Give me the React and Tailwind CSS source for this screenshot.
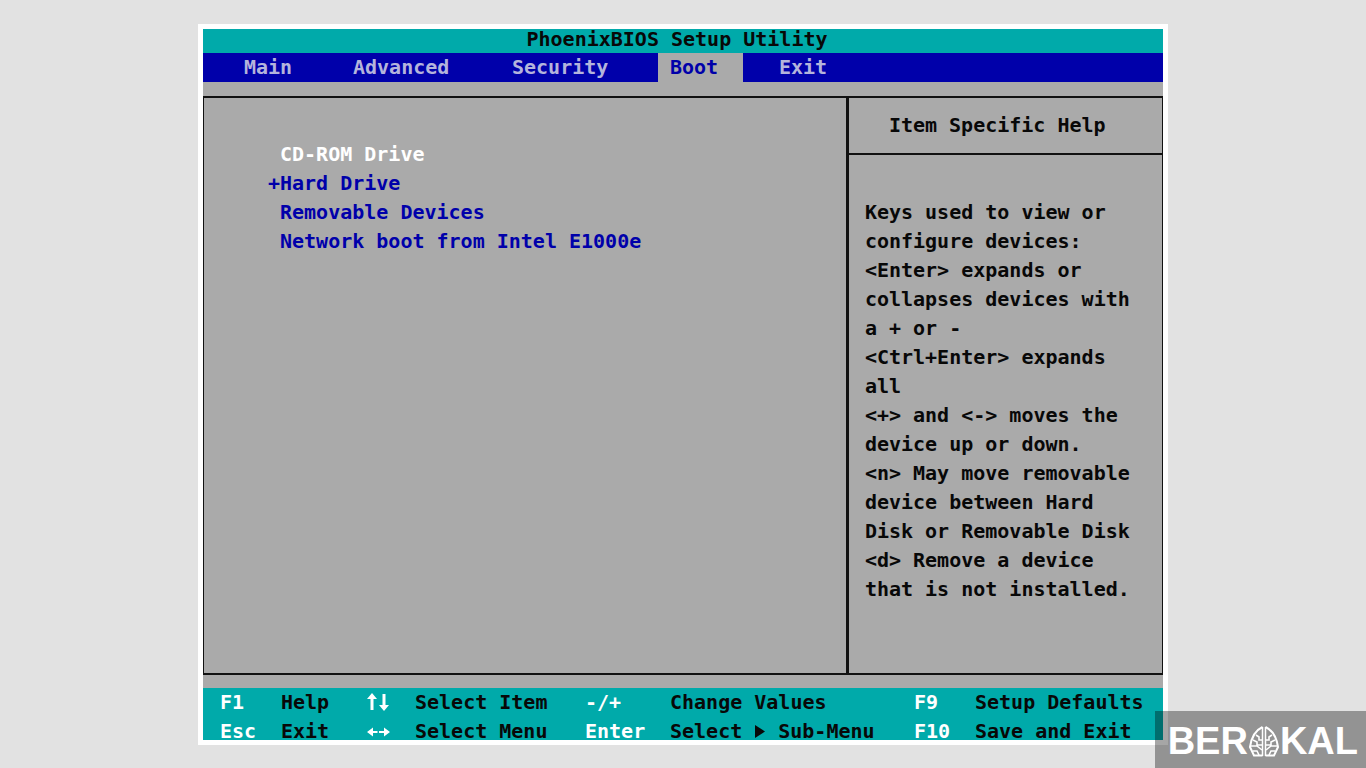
import React, { useState } from "react";

const menuItems = [
  { name: "Main", width: "w-[109px]" },
  { name: "Advanced", width: "w-[159px]" },
  { name: "Security", width: "w-[158px]" },
  { name: "Boot", width: "w-[85px]" },
  { name: "Exit", width: "w-[85px] ml-6" },
];

const bootDevices = [
  { name: "CD-ROM Drive" },
  { name: "Hard Drive", expandable: true },
  { name: "Removable Devices" },
  { name: "Network boot from Intel E1000e" },
];

const helpLines = [
  "Keys used to view or",
  "configure devices:",
  "<Enter> expands or",
  "collapses devices with",
  "a + or -",
  "<Ctrl+Enter> expands",
  "all",
  "<+> and <-> moves the",
  "device up or down.",
  "<n> May move removable",
  "device between Hard",
  "Disk or Removable Disk",
  "<d> Remove a device",
  "that is not installed.",
];

const UpDownIcon = () => (
  <svg width="24" height="29" viewBox="0 0 24 29" fill="currentColor" aria-label="Up and down">
    <path d="M6 5l5 6H7.500v11h-3V11H1zM18 23l-5-6h3.500V6h3v11H23z" />
  </svg>
);

const LeftRightIcon = () => (
  <svg width="24" height="29" viewBox="0 0 24 29" fill="currentColor" aria-label="Left and right">
    <path d="M1 15l6-4.500V14h4.500v2H7v3.500zM24 15l-6-4.500V14h-5v2h5v3.500z" />
  </svg>
);

const SubMenuIcon = () => (
  <svg width="12" height="29" viewBox="0 0 12 29" fill="currentColor" className="mx-3" aria-hidden="true">
    <path d="M1 8l10 6.500L1 21z" />
  </svg>
);

const LeafIcon = () => (
  <svg width="32" height="34" viewBox="0 0 32 34" fill="none" stroke="white" strokeWidth="2" aria-label="O">
    <path d="M14.500 2C8 5 3.500 12 2 22l4 8.500h8.500M17.500 2C24 5 28.500 12 30 22l-4 8.500h-8.500" />
    <path d="M14.500 2v29M17.500 2v29" strokeWidth="1.500" />
    <path d="M8 10l3 2v3h3M5 15l4 2v3h5M3 21h6l5 4M5 26h4l2 4M24 10l-3 2v3h-3M27 15l-4 2v3h-5M29 21h-6l-5 4M27 26h-4l-2 4" strokeWidth="1.600" />
  </svg>
);

const App = () => {
  const [activeMenu, setActiveMenu] = useState("Boot");
  const [selected, setSelected] = useState("CD-ROM Drive");

  return (
    <div className="relative min-h-screen bg-[#e2e2e2] pt-6 pb-5 font-['DejaVu_Sans_Mono',monospace] text-[20px] leading-[29px] font-bold text-[#080808]">
      <div className="mx-auto w-full max-w-[970px] border-5 border-white bg-[#aaaaaa]">
        <header>
          <div className="h-6 bg-[#00aaaa] pr-3 text-center">
            <h1 className="leading-5">PhoenixBIOS Setup Utility</h1>
          </div>
          <nav className="flex bg-[#0000aa] pl-[29px]">
            {menuItems.map((item) => (
              <button
                key={item.name}
                type="button"
                onClick={() => setActiveMenu(item.name)}
                className={`pl-3 text-left ${item.width} ${
                  activeMenu === item.name
                    ? "bg-[#aaaaaa] text-[#0000aa]"
                    : "text-[#b4b4dc]"
                }`}
              >
                {item.name}
              </button>
            ))}
          </nav>
        </header>

        <main className="mt-[14px] mb-[13px] flex min-h-[579px] border-x border-y-2 border-[#111111]">
          <section className="flex-1 pt-[42px] pl-16">
            <ul>
              {bootDevices.map((device) => (
                <li key={device.name}>
                  <button
                    type="button"
                    onClick={() => setSelected(device.name)}
                    className={`flex text-left ${
                      selected === device.name ? "text-white" : "text-[#0000aa]"
                    }`}
                  >
                    <span className="w-3">{device.expandable ? "+" : ""}</span>
                    {device.name}
                  </button>
                </li>
              ))}
            </ul>
          </section>

          <aside className="w-[33%] border-l-3 border-[#111111]">
            <h2 className="border-b-2 border-[#111111] py-[13px] pl-10">
              Item Specific Help
            </h2>
            <div className="pt-[43px] pl-4">
              {helpLines.map((line) => (
                <p key={line}>{line}</p>
              ))}
            </div>
          </aside>
        </main>

        <footer className="grid h-[52px] grid-cols-[61fr_85fr_49fr_170fr_85fr_244fr_61fr_188fr] bg-[#00aaaa] pl-[17px] whitespace-nowrap">
          <kbd className="font-[inherit] text-white">F1</kbd>
          <span>Help</span>
          <kbd className="text-white">
            <UpDownIcon />
          </kbd>
          <span>Select Item</span>
          <kbd className="font-[inherit] text-white">-/+</kbd>
          <span>Change Values</span>
          <kbd className="font-[inherit] text-white">F9</kbd>
          <span>Setup Defaults</span>
          <kbd className="font-[inherit] text-white">Esc</kbd>
          <span>Exit</span>
          <kbd className="text-white">
            <LeftRightIcon />
          </kbd>
          <span>Select Menu</span>
          <kbd className="font-[inherit] text-white">Enter</kbd>
          <span className="flex">
            Select
            <SubMenuIcon />
            Sub-Menu
          </span>
          <kbd className="font-[inherit] text-white">F10</kbd>
          <span>Save and Exit</span>
        </footer>
      </div>

      <div className="absolute right-0 bottom-0 flex h-[57px] w-[211px] items-center justify-end bg-black/35 pt-1 pr-2 font-['Liberation_Sans',sans-serif] text-[38px] text-white">
        <span>BER</span>
        <LeafIcon />
        <span>KAL</span>
      </div>
    </div>
  );
};

export default App;
